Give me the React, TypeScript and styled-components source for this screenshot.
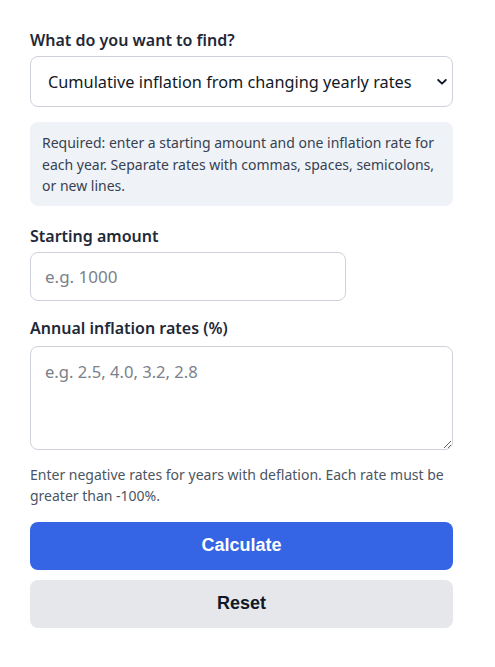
import styled, { createGlobalStyle } from 'styled-components';

const GlobalStyle = createGlobalStyle`
	body {
		margin: 0;
		background: #ffffff;
		font-family: 'Noto Sans', 'Open Sans', sans-serif;
		color: #1f2937;
	}
`;

const StyledPage = styled.div`
	width: 423px;
	padding: 28px 0 0 30px;
`;

const StyledField = styled.div<{ $gap?: number }>`
	display: flex;
	flex-direction: column;
	margin-bottom: ${({ $gap }) => ($gap ?? 16)}px;
`;

const StyledLabel = styled.label<{ $space?: number }>`
	font-size: 16px;
	font-weight: 600;
	line-height: 24px;
	color: #1f2937;
	margin-bottom: ${({ $space }) => ($space ?? 4)}px;
`;

const StyledSelectWrap = styled.div`
	position: relative;
`;

const StyledSelect = styled.select`
	appearance: none;
	width: 100%;
	height: 51px;
	box-sizing: border-box;
	padding: 0 30px 0 17px;
	font-family: inherit;
	font-size: 16.3px;
	color: #111827;
	background: #fff;
	border: 1px solid #cdd2da;
	border-radius: 8px;
`;

const StyledChevron = styled.svg`
	position: absolute;
	right: 6px;
	top: 50%;
	transform: translateY(-50%);
	pointer-events: none;
`;

const StyledNote = styled.div`
	background: #eff3f8;
	border-radius: 8px;
	padding: 10px 12px 9px;
	font-size: 14px;
	line-height: 21.5px;
	color: #374151;
	margin-bottom: 18px;
`;

const StyledInput = styled.input`
	width: 316px;
	height: 49px;
	box-sizing: border-box;
	padding: 0 14px;
	font-family: inherit;
	font-size: 17px;
	color: #111827;
	border: 1px solid #cdd2da;
	border-radius: 8px;
	&::placeholder {
		color: #7b818b;
	}
`;

const StyledTextArea = styled.textarea`
	width: 100%;
	height: 104px;
	box-sizing: border-box;
	padding: 13px 14px 10px;
	font-family: inherit;
	font-size: 16.6px;
	line-height: 24px;
	color: #111827;
	border: 1px solid #cdd2da;
	border-radius: 8px;
	display: block;
	&::placeholder {
		color: #7b818b;
	}
`;

const StyledHelp = styled.p`
	margin: 14px 0 0;
	font-size: 14px;
	line-height: 21px;
	color: #4b5563;
`;

const StyledButton = styled.button<{ $primary?: boolean }>`
	width: 100%;
	height: 48px;
	border: none;
	border-radius: 8px;
	font-family: 'Liberation Sans', Arial, sans-serif;
	font-size: 18px;
	font-weight: 700;
	cursor: pointer;
	background: ${({ $primary }) => ($primary ? '#3565e5' : '#e5e7eb')};
	color: ${({ $primary }) => ($primary ? '#ffffff' : '#111827')};
	margin-bottom: 10px;
	display: block;
`;

const App = () => {
	return (
		<>
			<GlobalStyle />
			<StyledPage>
				<StyledField $gap={15}>
					<StyledLabel>What do you want to find?</StyledLabel>
					<StyledSelectWrap>
						<StyledSelect defaultValue='cumulative'>
							<option value='cumulative'>Cumulative inflation from changing yearly rates</option>
						</StyledSelect>
						<StyledChevron width='10' height='7' viewBox='0 0 10 7'>
							<path d='M1.2 1.5 L5 5.2 L8.8 1.5' fill='none' stroke='#111827' strokeWidth='1.8' strokeLinecap='round' strokeLinejoin='round' />
						</StyledChevron>
					</StyledSelectWrap>
				</StyledField>

				<StyledNote>
					Required: enter a starting amount and one inflation rate for each year. Separate rates with commas, spaces, semicolons, or new lines.
				</StyledNote>

				<StyledField $gap={15}>
					<StyledLabel>Starting amount</StyledLabel>
					<StyledInput placeholder='e.g. 1000' />
				</StyledField>

				<StyledField $gap={16}>
					<StyledLabel $space={6}>Annual inflation rates (%)</StyledLabel>
					<StyledTextArea placeholder='e.g. 2.5, 4.0, 3.2, 2.8' />
					<StyledHelp>Enter negative rates for years with deflation. Each rate must be greater than -100%.</StyledHelp>
				</StyledField>

				<StyledButton $primary>Calculate</StyledButton>
				<StyledButton>Reset</StyledButton>
			</StyledPage>
		</>
	);
};

export default App;
